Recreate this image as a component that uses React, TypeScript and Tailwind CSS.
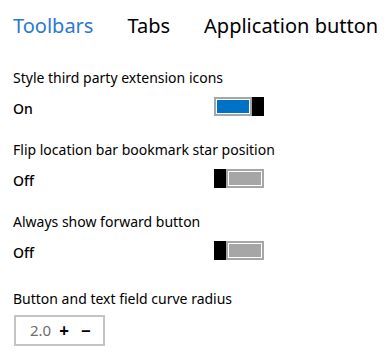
const font = { fontFamily: '"Segoe UI", "Noto Sans", sans-serif' };

function Toggle({ on }: { on: boolean }) {
  const track = (
    <div className="h-[19px] w-[38px] border-2 border-[#a6a6a6] bg-[#a6a6a6]">
      <div className={`h-full w-full border border-white ${on ? "bg-[#0072c6]" : "bg-[#a6a6a6]"}`} />
    </div>
  );
  const thumb = <div className="h-[19px] w-[12px] bg-black" />;
  return (
    <div className="flex" role="switch" aria-checked={on}>
      {on ? track : thumb}
      {on ? thumb : track}
    </div>
  );
}

function ToggleSetting({ label, on }: { label: string; on: boolean }) {
  return (
    <div className="h-[72px]">
      <div className="text-[14px] leading-[20px] text-black">{label}</div>
      <div className="mt-[9px] flex w-[251px] items-start justify-between">
        <span className="pt-[2px] text-[14px] font-medium leading-[19px] text-black">{on ? "On" : "Off"}</span>
        <Toggle on={on} />
      </div>
    </div>
  );
}

export default function App() {
  return (
    <div className="h-[359px] w-[390px] overflow-hidden bg-white pl-[13px]" style={font}>
      <div className="flex gap-[34px] pt-[12px] text-[20px] leading-[28px]">
        <span className="text-[#2b79d0]">Toolbars</span>
        <span className="text-black">Tabs</span>
        <span className="text-black">Application button</span>
      </div>
      <div className="mt-[28px]">
        <ToggleSetting label="Style third party extension icons" on={true} />
        <ToggleSetting label="Flip location bar bookmark star position" on={false} />
        <ToggleSetting label="Always show forward button" on={false} />
        <div className="pt-[5px]">
          <div className="text-[14px] leading-[20px] text-black">Button and text field curve radius</div>
          <div className="mt-[6px] ml-[1px] flex h-[31px] w-[91px] items-center border-2 border-[#c4c4c4]">
            <span className="ml-[14px] text-[15px] text-[#6d6d6d]">2.0</span>
            <span className="ml-[8px] text-[17px] font-bold leading-none text-black">+</span>
            <span className="ml-[12px] text-[17px] font-bold leading-none text-black">−</span>
          </div>
        </div>
      </div>
    </div>
  );
}
